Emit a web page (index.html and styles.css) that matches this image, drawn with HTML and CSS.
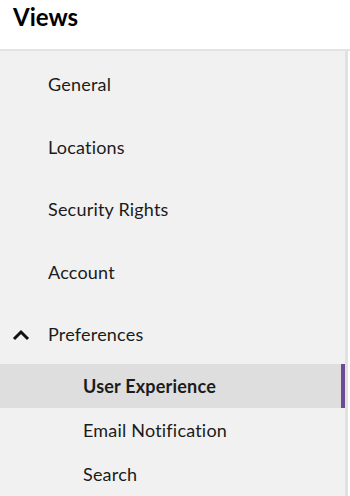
FILE: index.html
```html
<!DOCTYPE html>
<html lang="en">
<head>
  <meta charset="UTF-8" />
  <title>Views</title>
  <meta name="viewport" content="width=device-width, initial-scale=1" />
  <link rel="stylesheet" href="styles.css">
</head>
<body>
  <aside class="views-panel">
    <h2 class="views-title">Views</h2>
    <nav class="views-nav">
      <a class="nav-item" href="#">General</a>
      <a class="nav-item" href="#">Locations</a>
      <a class="nav-item" href="#">Security Rights</a>
      <a class="nav-item" href="#">Account</a>
      <a class="nav-item nav-group" href="#">
        <svg class="chevron" width="18" height="12" viewBox="0 0 18 12" aria-hidden="true">
          <path d="M2 10 L9 3 L16 10" fill="none" stroke="#111" stroke-width="3" />
        </svg>
        Preferences
      </a>
      <a class="sub-item active" href="#">User Experience</a>
      <a class="sub-item" href="#">Email Notification</a>
      <a class="sub-item" href="#">Search</a>
    </nav>
  </aside>
</body>
</html>
```

FILE: styles.css
```css
body {
  margin: 0;
  background: #fff;
  font-family: Lato, 'Liberation Sans', sans-serif;
  color: #1b1b1b;
}
.views-panel {
  width: 345px;
  min-height: 496px;
  border-right: 3px solid #e1e1e1;
  background: #f1f1f1;
}
.views-title {
  margin: 0 -5px 0 0;
  height: 49px;
  padding: 0 13px;
  background: #fff;
  border-bottom: 2px solid #e3e3e3;
  font-size: 24px;
  font-weight: 700;
  line-height: 33px;
  color: #000;
}
.views-nav {
  display: flex;
  flex-direction: column;
  padding-top: 2px;
}
.nav-item {
  display: flex;
  align-items: center;
  height: 62.5px;
  padding-left: 48px;
  font-size: 18px;
  letter-spacing: 0.2px;
  color: inherit;
  text-decoration: none;
}
.nav-group {
  position: relative;
  height: 61px;
}
.chevron {
  position: absolute;
  left: 12px;
  top: 26px;
}
.sub-item {
  display: flex;
  align-items: center;
  height: 44px;
  padding-left: 83px;
  font-size: 18px;
  letter-spacing: 0.2px;
  color: inherit;
  text-decoration: none;
}
.sub-item.active {
  background: #dedede;
  font-weight: 700;
  box-shadow: inset -4px 0 0 #6a4b94;
}
```
